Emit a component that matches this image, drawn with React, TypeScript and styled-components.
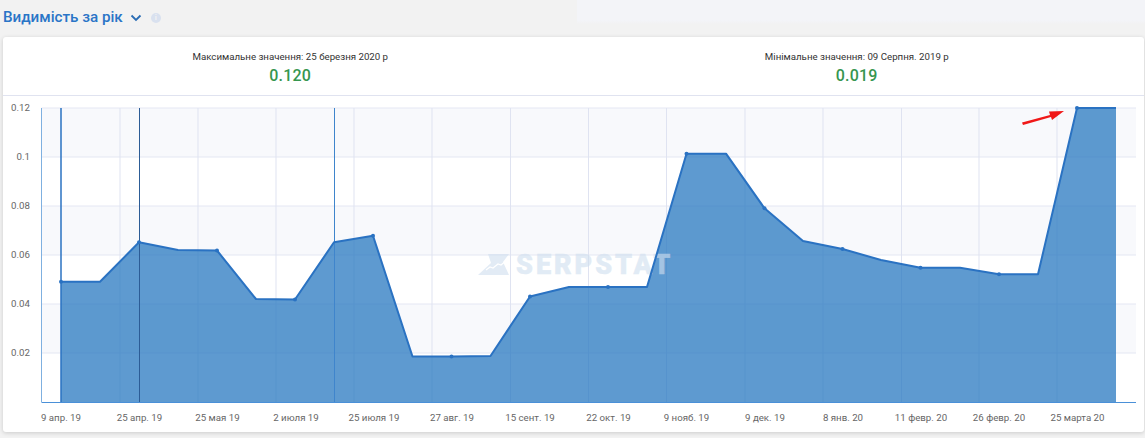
import { createGlobalStyle, styled } from "styled-components";

const CHART_TOP = 108;
const CHART_BASE = 402;
const PLOT_LEFT = 41.5;
const PLOT_RIGHT = 1136;

const POINTS: [number, number][] = [
  [61, 281.7], [100, 281.7], [139, 242.3], [178, 250], [217, 250.5],
  [256, 299], [295, 299.5], [334, 242.3], [373, 235.7], [412.5, 356.5],
  [451.5, 356.5], [490.5, 356], [530, 296.5], [569, 287], [608, 287],
  [647, 287], [686.5, 153.7], [726, 153.7], [764.5, 208.3], [803, 241],
  [842.5, 249], [881, 260], [920.5, 267.7], [960, 267.7], [999, 274.3],
  [1038, 274.3], [1077, 108], [1116, 108],
];

const GRID_X = [120, 198, 276, 354, 432, 510.5, 588.5, 666.5, 745, 823, 901.5, 979, 1057];

const Y_LABELS = [
  { y: 108, text: "0.12", baseline: 110.5 },
  { y: 157, text: "0.1", baseline: 159.5 },
  { y: 206, text: "0.08", baseline: 209 },
  { y: 255, text: "0.06", baseline: 258 },
  { y: 304, text: "0.04", baseline: 307 },
  { y: 353, text: "0.02", baseline: 356 },
];

const X_LABELS = [
  { x: 61, text: "9 апр. 19" },
  { x: 139.5, text: "25 апр. 19" },
  { x: 217.5, text: "25 мая 19" },
  { x: 296, text: "2 июля 19" },
  { x: 374, text: "25 июля 19" },
  { x: 452, text: "27 авг. 19" },
  { x: 530, text: "15 сент. 19" },
  { x: 608.5, text: "22 окт. 19" },
  { x: 686.5, text: "9 нояб. 19" },
  { x: 765, text: "9 дек. 19" },
  { x: 843, text: "8 янв. 20" },
  { x: 921, text: "11 февр. 20" },
  { x: 999, text: "26 февр. 20" },
  { x: 1077.5, text: "25 марта 20" },
];

const GlobalStyle = createGlobalStyle`
  html, body {
    margin: 0;
    padding: 0;
    background: #f2f2f2;
  }
  body {
    font-family: Roboto, "Liberation Sans", sans-serif;
  }
`;

const Page = styled.div`
  width: 1145px;
  height: 438px;
  overflow: hidden;
  box-sizing: border-box;
  padding-left: 3px;
`;

const Header = styled.header`
  height: 37px;
  display: flex;
  align-items: flex-start;
  justify-content: space-between;
`;

const TitleRow = styled.div`
  height: 37px;
  display: flex;
  align-items: center;
  padding-bottom: 3px;
  box-sizing: border-box;
`;

const Title = styled.h2`
  margin: 0;
  font-size: 15.2px;
  line-height: 20px;
  font-weight: 500;
  color: #2a75c7;
`;

const Chevron = styled.svg`
  width: 12px;
  height: 8px;
  margin-left: 7px;
  margin-top: 1px;
`;

const InfoBadge = styled.span`
  width: 10px;
  height: 10px;
  margin-left: 9px;
  margin-top: 2px;
  border-radius: 50%;
  background: #d9e1ef;
  color: #f2f2f2;
  font-size: 8px;
  line-height: 10px;
  font-weight: 700;
  text-align: center;
`;

const TopPanel = styled.div`
  width: 568px;
  height: 24px;
  background: linear-gradient(#f3f4f8 85%, #f2f2f2);
`;

const Card = styled.section`
  width: 1141px;
  height: 395px;
  background: #fff;
  border-radius: 3px;
  box-shadow: 0 1px 4px rgba(0, 0, 0, 0.16);
`;

const Stats = styled.div`
  height: 59px;
  box-sizing: border-box;
  border-bottom: 1px solid #e0e3f0;
  display: grid;
  grid-template-columns: 1fr 1fr;
  padding: 0 4px;
`;

const Stat = styled.div`
  padding-top: 13px;
  text-align: center;
`;

const StatLabel = styled.div`
  font-size: 9.7px;
  line-height: 14px;
  color: #333;
`;

const StatValue = styled.div`
  margin-top: 2px;
  font-size: 16px;
  line-height: 20px;
  font-weight: 500;
  letter-spacing: 0.2px;
  color: #36964f;
`;

const ChartSvg = styled.svg`
  display: block;
  width: 1141px;
  height: 336px;

  text {
    font-family: Roboto, "Liberation Sans", sans-serif;
  }
`;

const AxisText = styled.text`
  font-size: 9.7px;
  fill: #666;
`;

const Watermark = styled.text`
  font-size: 27px;
  font-weight: 900;
  letter-spacing: 3px;
  fill: #d0dfef;
  stroke: #d0dfef;
  stroke-width: 0.5px;
  opacity: 0.62;
`;

export default function App() {
  const line = POINTS.map(([x, y]) => `${x},${y}`).join(" ");
  const area = `61,${CHART_BASE} ${line} 1116,${CHART_BASE}`;

  return (
    <>
      <GlobalStyle />
      <Page>
        <Header>
          <TitleRow>
            <Title>Видимість за рік</Title>
            <Chevron viewBox="0 0 12 8">
              <path d="M1.5 1.5 6 6l4.5-4.5" fill="none" stroke="#2a6cb4" strokeWidth="1.8" />
            </Chevron>
            <InfoBadge>i</InfoBadge>
          </TitleRow>
          <TopPanel />
        </Header>
        <Card>
          <Stats>
            <Stat>
              <StatLabel>Максимальне значення: 25 березня 2020 р</StatLabel>
              <StatValue>0.120</StatValue>
            </Stat>
            <Stat>
              <StatLabel>Мінімальне значення: 09 Серпня. 2019 р</StatLabel>
              <StatValue>0.019</StatValue>
            </Stat>
          </Stats>
          <ChartSvg viewBox="3 96 1141 336">
            <clipPath id="label-clip">
              <rect x={3} y={104} width={38} height={300} />
            </clipPath>
            <rect x={PLOT_LEFT} y={108} width={PLOT_RIGHT - PLOT_LEFT} height={49} fill="#f8f9fc" />
            <rect x={PLOT_LEFT} y={206} width={PLOT_RIGHT - PLOT_LEFT} height={49} fill="#f8f9fc" />
            <rect x={PLOT_LEFT} y={304} width={PLOT_RIGHT - PLOT_LEFT} height={49} fill="#f8f9fc" />
            {Y_LABELS.map(({ y }) => (
              <line key={y} x1={PLOT_LEFT} x2={PLOT_RIGHT} y1={y} y2={y} stroke="#e4e7f3" />
            ))}
            {GRID_X.map((x) => (
              <line key={x} x1={x} x2={x} y1={CHART_TOP} y2={CHART_BASE} stroke="#dfe3f1" />
            ))}

            <polygon points={area} fill="#2878c0" fillOpacity="0.75" />

            <path d="M488 254H509L503 262L509 275H478L491 263Z" fill="#d0dfef" opacity="0.62" />
            <path d="M486 270l4-3 3 1 5-4 3 1 6-5" fill="none" stroke="#fff" strokeWidth="1.2" />
            <Watermark x={516} y={274}>SERPSTAT</Watermark>

            <line x1={61} x2={61} y1={CHART_TOP} y2={CHART_BASE} stroke="#2a72c2" strokeWidth="1.5" />
            <line x1={139.5} x2={139.5} y1={CHART_TOP} y2={CHART_BASE} stroke="#2c5c96" />
            <line x1={334.5} x2={334.5} y1={CHART_TOP} y2={CHART_BASE} stroke="#3f85cc" />
            <line x1={PLOT_LEFT} x2={PLOT_LEFT} y1={CHART_TOP} y2={CHART_BASE} stroke="#7fb0e0" />
            <line x1={PLOT_LEFT} x2={PLOT_RIGHT} y1={402.5} y2={402.5} stroke="#4a90d8" />

            <polyline points={line} fill="none" stroke="#2a72c2" strokeWidth="2" strokeLinejoin="round" />
            {POINTS.filter((_, i) => i % 2 === 0).map(([x, y]) => (
              <circle key={x} cx={x} cy={y} r={2} fill="#2a72c2" />
            ))}

            <g clipPath="url(#label-clip)">
              {Y_LABELS.map(({ baseline, text }) => (
                <AxisText key={text} x={30} y={baseline} textAnchor="end">
                  {text}
                </AxisText>
              ))}
            </g>
            {X_LABELS.map(({ x, text }) => (
              <AxisText key={text} x={x} y={421} textAnchor="middle">
                {text}
              </AxisText>
            ))}

            <path d="M1022 122.5l28-7.5-1-3.5 15-0.5-12 9-1-3-28 8z" fill="#f01818" />
          </ChartSvg>
        </Card>
      </Page>
    </>
  );
}
